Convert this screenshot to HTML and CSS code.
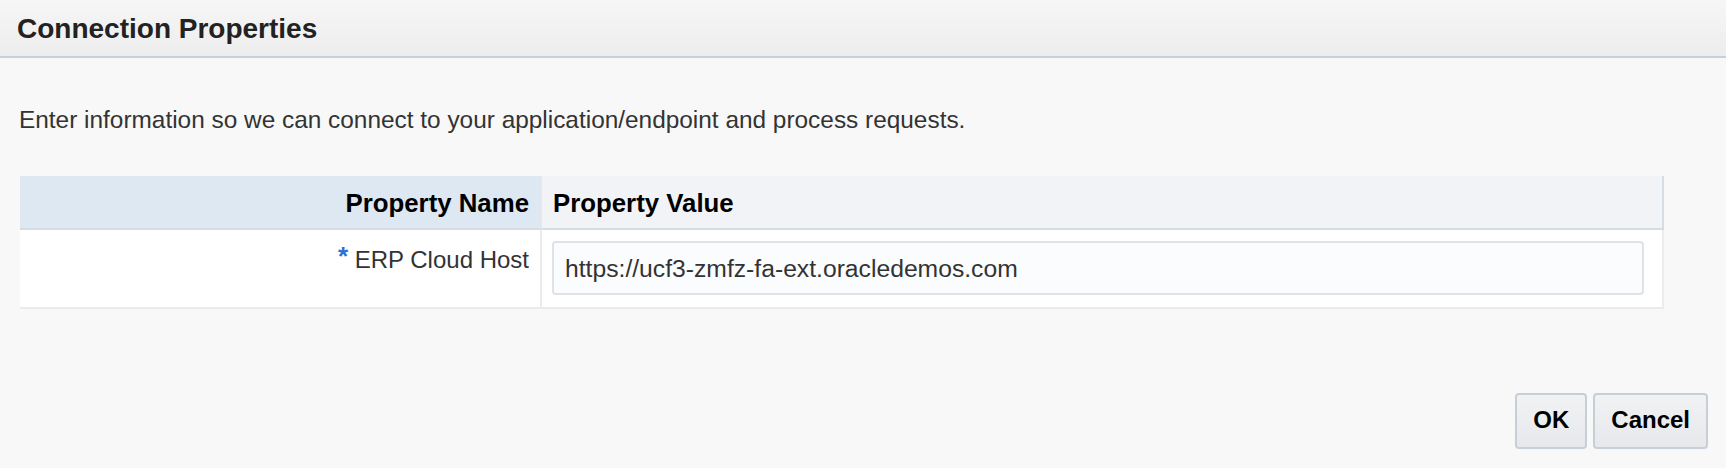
FILE: index.html
```html
<!DOCTYPE html>
<html lang="en">
<head>
<meta charset="utf-8">
<title>Connection Properties</title>
<link rel="stylesheet" href="styles.css">
</head>
<body>
<div class="dialog">
  <header class="titlebar">
    <h1 class="title">Connection Properties</h1>
  </header>
  <main class="content">
    <p class="intro">Enter information so we can connect to your application/endpoint and process requests.</p>
    <div class="props">
      <div class="cell head head-name">Property Name</div>
      <div class="cell head head-value">Property Value</div>
      <div class="cell body body-name"><span class="req">*</span> ERP Cloud Host</div>
      <div class="cell body body-value">
        <input class="field" type="text" value="https://ucf3-zmfz-fa-ext.oracledemos.com">
      </div>
    </div>
  </main>
  <footer class="actions">
    <button class="btn" type="button">OK</button>
    <button class="btn" type="button">Cancel</button>
  </footer>
</div>
</body>
</html>
```

FILE: styles.css
```css
html, body {
  margin: 0;
  padding: 0;
  background: #f8f8f8;
}

body {
  font-family: "Liberation Sans", Arial, Helvetica, sans-serif;
  color: #333333;
  width: 1726px;
  height: 468px;
  overflow: hidden;
}

.titlebar {
  height: 56px;
  border-bottom: 2px solid #c8d1da;
  background: linear-gradient(#f6f6f6, #ededed);
  padding-left: 17px;
}

.title {
  margin: 0;
  font-size: 28px;
  line-height: 57px;
  font-weight: bold;
  color: #222222;
}

.content {
  padding: 0 0 0 19px;
}

.intro {
  margin: 48px 0 0 0;
  font-size: 24.4px;
  line-height: 28px;
  color: #333333;
}

.props {
  display: grid;
  grid-template-columns: 522px 1fr;
  width: 1644px;
  margin: 42px 0 0 1px;
}

.cell {
  box-sizing: border-box;
}

.head {
  height: 54px;
  border-bottom: 2px solid #d5dce4;
  font-size: 25.8px;
  font-weight: bold;
  line-height: 52px;
  padding-top: 1px;
  color: #000000;
}

.head-name {
  background: #dde8f3;
  text-align: right;
  padding-right: 11px;
  border-right: 2px solid #e3e8ee;
}

.head-value {
  background: #f2f3f7;
  padding-left: 11px;
  border-right: 2px solid #d6dce3;
}

.body {
  height: 79px;
  background: #ffffff;
  border-bottom: 2px solid #ebebeb;
}

.body-name {
  text-align: right;
  padding: 12px 11px 0 0;
  font-size: 24px;
  line-height: 28px;
  color: #333333;
  border-right: 2px solid #ebebeb;
}

.req {
  color: #2f6fcf;
  font-weight: bold;
  font-size: 26px;
  vertical-align: 3px;
}

.body-value {
  padding: 11px 18px 0 10px;
  border-right: 2px solid #ececec;
}

.field {
  box-sizing: border-box;
  display: block;
  width: 100%;
  height: 54px;
  margin: 0;
  padding: 2px 11px 0 11px;
  border: 2px solid #dfe3e8;
  border-radius: 4px;
  background: #fbfcfe;
  font-family: "Liberation Sans", Arial, Helvetica, sans-serif;
  font-size: 24.7px;
  color: #333333;
  outline: none;
}

.actions {
  display: flex;
  justify-content: flex-end;
  gap: 6px;
  margin-top: 84px;
  padding-right: 18px;
}

.btn {
  box-sizing: border-box;
  height: 56px;
  margin: 0;
  padding: 0 16px 2px 16px;
  border: 2px solid #c6cfd8;
  border-radius: 4px;
  background: linear-gradient(#f1f2f4, #e6e8eb);
  font-family: "Liberation Sans", Arial, Helvetica, sans-serif;
  font-size: 24px;
  font-weight: bold;
  line-height: 50px;
  color: #000000;
}
```
